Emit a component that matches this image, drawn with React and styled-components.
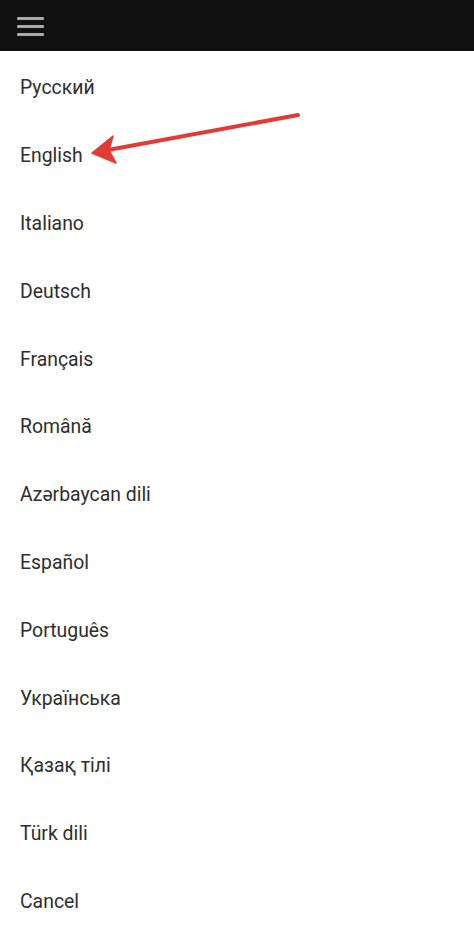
import styled, { createGlobalStyle } from "styled-components"

const GlobalStyle = createGlobalStyle`
  html, body {
    margin: 0;
    padding: 0;
    background: #ffffff;
  }
  body {
    font-family: Roboto, "Liberation Sans", sans-serif;
  }
`

const Screen = styled.div`
  position: relative;
  width: 474px;
  height: 941px;
  overflow: hidden;
  background: #fff;
`
const TopBar = styled.header`
  height: 51px;
  background: #111111;
  display: flex;
  align-items: center;
  padding-left: 17px;
  box-sizing: border-box;
`
const MenuButton = styled.div`
  width: 27px;
  display: flex;
  flex-direction: column;
  gap: 5px;
  margin-top: 1px;
`
const MenuLine = styled.span`
  display: block;
  height: 3px;
  background: #a9a9a9;
  border-radius: 1px;
`
const List = styled.ul`
  list-style: none;
  margin: 0;
  padding: 3px 0 0;
`
const Item = styled.li`
  height: 67.8px;
  display: flex;
  align-items: center;
  padding-left: 20px;
  font-size: 19.4px;
  color: #2e2e2e;
`
const Arrow = styled.svg`
  position: absolute;
  left: 0;
  top: 0;
  pointer-events: none;
`

const languages = [
  "Русский",
  "English",
  "Italiano",
  "Deutsch",
  "Français",
  "Română",
  "Azərbaycan dili",
  "Español",
  "Português",
  "Українська",
  "Қазақ тілі",
  "Türk dili",
  "Cancel",
]

const App = () => {
  return (
    <Screen>
      <GlobalStyle />
      <TopBar>
        <MenuButton>
          <MenuLine />
          <MenuLine />
          <MenuLine />
        </MenuButton>
      </TopBar>
      <List>
        {languages.map((lang) => (
          <Item key={lang}>{lang}</Item>
        ))}
      </List>
      {/* red pointer at English */}
      <Arrow width="474" height="941" viewBox="0 0 474 941">
        <line x1="298" y1="115" x2="108" y2="150" stroke="#e53a33" strokeWidth="4" strokeLinecap="round" />
        <path d="M92 153 L113 136 L109 150 L116 163 Z" fill="#e53a33" stroke="#e53a33" strokeWidth="1.5" strokeLinejoin="round" />
      </Arrow>
    </Screen>
  )
}

export default App
